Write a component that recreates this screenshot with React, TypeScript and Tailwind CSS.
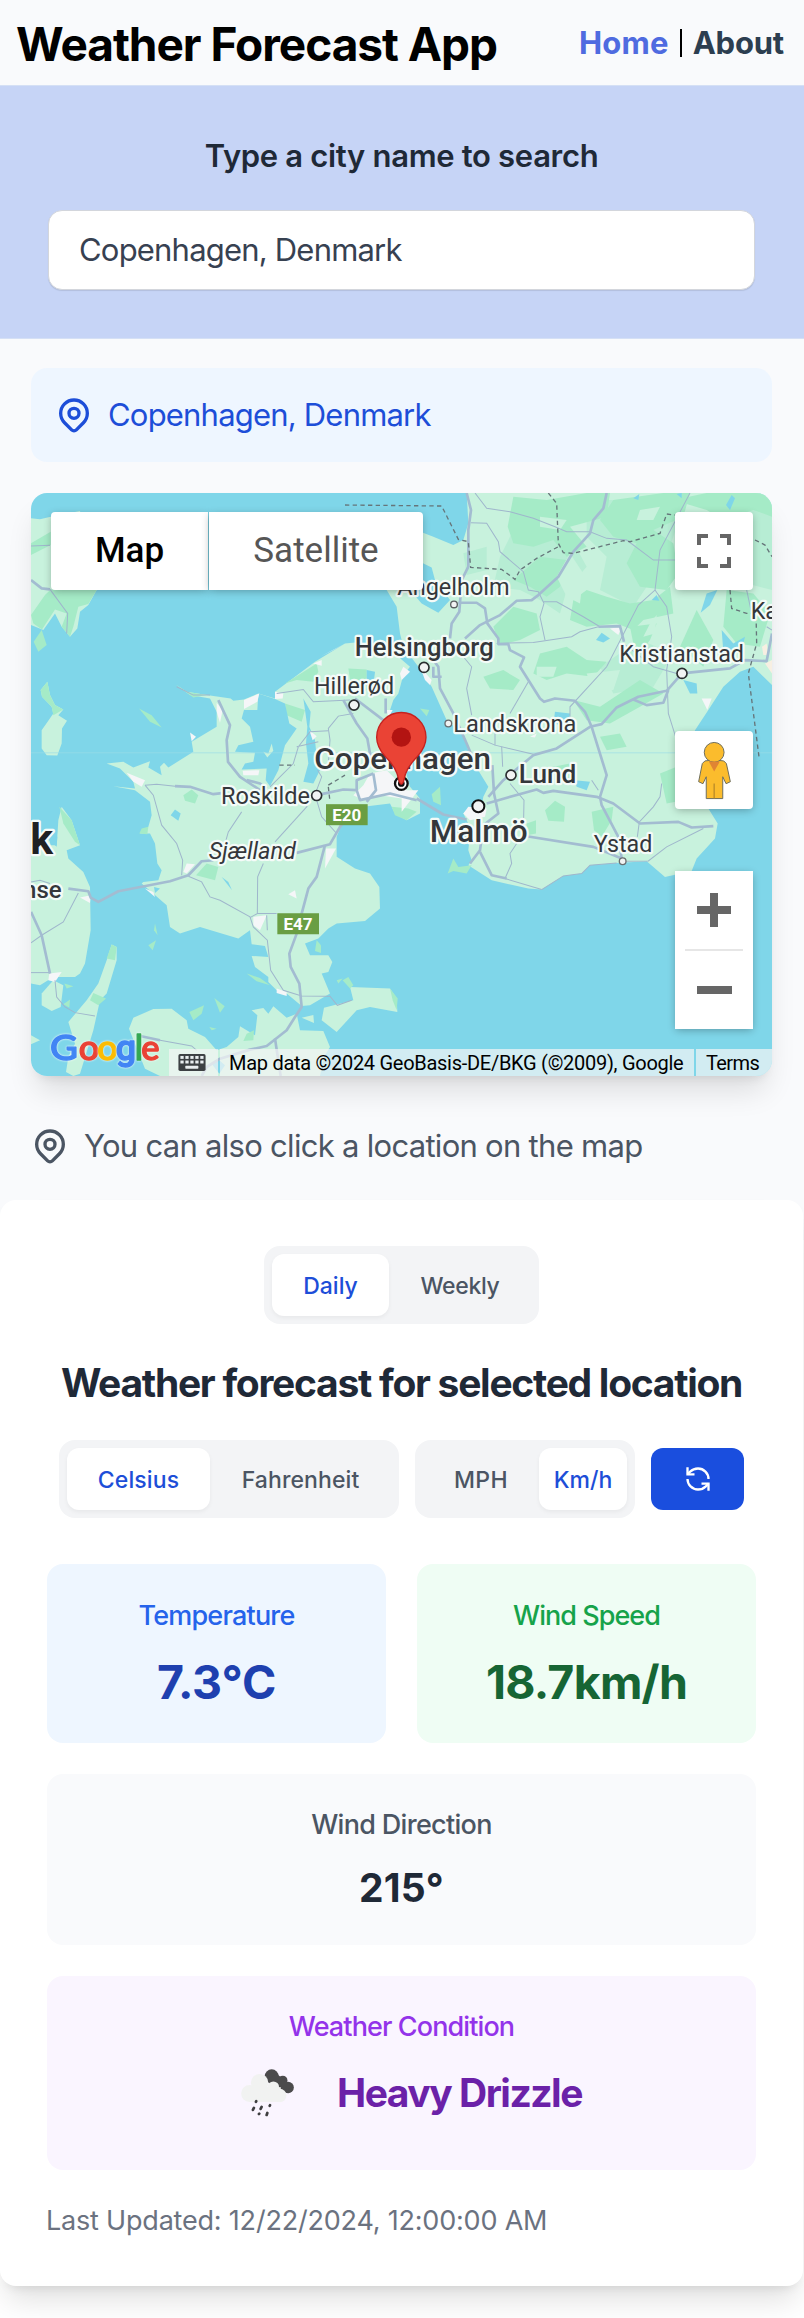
import React from "react";

const LAND = "#c8f2dd";
const FOREST = "#a5ebc7";
const MID = "#b7edd4";
const ROAD = "#a3bcd1";
const SEA = "#7fd6e9";

const land = [
  // Djursland
  "M33,115 60,118 92,110 180,93 230,330 205,375 180,395 172,445 150,470 125,440 105,400 70,450 33,435Z",
  // Samso
  "M62,630 82,605 90,645 105,675 130,688 115,705 141,722 126,745 125,790 112,826 80,825 65,805 65,750 100,700 95,680 66,650Z",
  // Zealand
  "M467,613 500,635 560,645 632,655 640,662 672,658 715,640 765,655 765,635 885,545 975,490 1005,487 1100,500 1170,560 1150,585 1135,640 1120,660 1105,705 1130,780 1170,920 1200,955 1200,1000 1160,1020 1125,1000 1110,970 1030,980 970,1020 950,1070 950,1130 1005,1165 1050,1180 1078,1220 1080,1285 1035,1322 950,1330 925,1345 895,1375 855,1390 870,1425 925,1425 937,1445 925,1475 905,1480 930,1540 870,1575 845,1577 800,1540 770,1530 745,1505 745,1490 705,1460 695,1427 745,1430 735,1397 695,1392 690,1350 655,1375 540,1340 480,1360 450,1340 440,1275 365,1210 370,1205 415,1200 425,1170 412,1150 405,1090 390,1060 360,1060 385,1040 395,1005 390,965 345,930 280,918 345,925 340,905 300,865 260,850 310,845 340,862 390,843 385,862 425,885 420,860 432,848 445,862 520,815 515,785 590,740 590,695 570,655 510,645Z",
  // Funen
  "M125,980 155,1020 180,1095 140,1110 145,1135 190,1175 210,1220 212,1350 195,1450 180,1480 165,1490 100,1490 60,1515 33,1510 33,1090 75,1070 110,1100 115,1020Z",
  "M100,1500 130,1515 122,1580 95,1592 65,1575 65,1540Z",
  // Langeland
  "M275,1393 290,1400 290,1440 260,1540 240,1560 220,1650 180,1780 160,1787 138,1775 145,1730 165,1690 145,1625 200,1560 235,1510 260,1440Z",
  "M33,1665 60,1680 33,1692Z",
  // Lolland and Falster
  "M327,1645 340,1612 400,1586 455,1585 500,1620 505,1645 555,1670 590,1710 620,1700 655,1670 660,1638 705,1665 712,1605 695,1590 730,1583 745,1600 760,1578 800,1612 830,1600 840,1650 910,1652 930,1700 912,1730 900,1787 420,1787 375,1765 345,1690Z",
  "M845,1612 880,1604 882,1628Z",
  // Mon
  "M912,1582 1000,1560 990,1520 1110,1525 1130,1555 1132,1595 1050,1580 1010,1590 950,1655 905,1620Z",
  // Sweden
  "M2256,39 1340,39 1345,130 1330,180 1300,195 1240,170 1209,158 1160,150 1100,330 1130,380 1140,460 1150,500 1195,560 1235,620 1280,720 1330,760 1350,830 1405,920 1390,950 1385,980 1345,985 1330,1000 1352,1045 1345,1110 1355,1140 1345,1155 1415,1200 1525,1225 1565,1228 1630,1187 1685,1180 1710,1155 1790,1148 1880,1143 1935,1190 2015,1172 2030,1135 2085,1075 2093,1030 2065,985 2000,850 2025,750 2065,690 2110,620 2160,575 2200,560 2256,615Z",
];

const mids = [
  "M1480,150 1560,120 1640,150 1700,260 1640,330 1620,400 1560,360 1500,330 1420,320 1440,230Z",
  "M1700,60 1840,60 1980,110 1950,200 2020,300 1900,290 1840,380 1740,330 1760,230 1700,170Z",
  "M2100,60 2256,90 2256,330 2140,300 2080,180Z",
  "M1740,560 1860,480 1960,520 1900,620 1780,640Z",
  "M1330,220 1400,200 1400,270 1340,285Z",
];

const forests = [
  "M33,190 92,155 92,195 33,225Z",
  "M92,328 230,330 205,372 175,380 160,440 150,470 125,440 140,400 105,388 66,448 40,430 33,405 75,345Z",
  "M65,450 80,495 55,515 41,485Z",
  "M62,630 82,605 90,645 105,675 130,688 100,705 95,680 66,650Z",
  "M357,685 395,705 425,742 390,725Z",
  "M467,613 500,635 560,645 520,652Z",
  "M795,610 890,550 895,575 880,605 830,600Z",
  "M985,565 1040,568 1040,600 1060,620 1020,640 990,600Z",
  "M795,670 855,690 845,725 800,705Z",
  "M490,945 515,928 535,945 525,970 495,962Z",
  "M560,1150 595,1160 585,1200 528,1185Z",
  "M118,980 155,1020 180,1095 165,1085 130,1030Z",
  "M365,1045 385,1040 382,1062 358,1060Z",
  "M275,1393 290,1400 285,1440 260,1435Z",
  "M220,1538 258,1555 235,1575 210,1560Z",
  "M508,1595 552,1575 545,1600 520,1620Z",
  "M583,1553 614,1578 600,1597Z",
  "M405,1330 413,1365 402,1350Z",
  "M385,1395 408,1380 398,1410Z",
  "M680,1480 720,1493 750,1515 710,1503Z",
  "M890,1380 903,1395 903,1418 885,1412Z",
  "M968,1500 985,1490 1000,1515 990,1525Z",
  "M950,1500 968,1495 955,1510Z",
  "M1110,1525 1133,1555 1130,1590 1118,1560Z",
  "M133,1510 160,1518 140,1525Z",
  "M130,1572 150,1558 148,1582Z",
  "M680,1660 702,1650 700,1680 670,1682Z",
  "M568,1640 590,1645 575,1650Z",
  "M1115,980 1165,985 1190,995 1160,1020 1125,1005Z",
  "M1235,942 1260,920 1263,975 1240,965Z",
  "M1200,685 1228,690 1220,708Z",
  "M1283,1180 1300,1135 1315,1160 1355,1155 1340,1180 1300,1172Z",
  // Scania
  "M1480,50 1580,60 1700,39 1770,39 1760,110 1650,140 1700,200 1640,230 1600,180 1540,200 1480,190 1463,140Z",
  "M1780,60 1930,39 2010,39 1990,110 1900,150 1960,190 1975,280 1940,330 1860,320 1820,250 1850,190 1780,170 1740,120Z",
  "M1560,230 1640,240 1620,320 1580,350 1530,320 1480,300Z",
  "M1660,360 1700,330 1760,350 1830,370 1900,360 1950,320 1960,400 1870,420 1840,450 1790,430 1700,440 1650,420Z",
  "M1420,440 1480,380 1550,400 1560,450 1500,480 1440,495Z",
  "M1560,520 1640,500 1700,540 1760,545 1720,590 1640,580 1580,600 1540,580Z",
  "M1830,440 1910,430 1890,480 1860,520 1840,490Z",
  "M1390,590 1450,570 1500,600 1480,630 1410,625Z",
  "M1660,660 1740,680 1860,600 1930,640 1860,680 1770,730 1700,720Z",
  "M1960,60 2060,39 2256,39 2256,110 2200,90 2110,120 2060,90Z",
  "M2120,330 2200,340 2250,400 2220,500 2150,490 2110,440Z",
  "M2030,390 2080,480 2050,560 1980,500Z",
  "M1575,990 1605,962 1635,980 1632,1025 1585,1022Z",
  "M1715,995 1780,980 1775,1020 1745,1070 1722,1050Z",
  "M1520,1030 1548,1020 1548,1060 1520,1065Z",
  "M1600,860 1650,850 1665,890 1610,900Z",
  "M1920,880 1970,860 1990,960 1940,970Z",
  "M1740,770 1800,760 1820,800 1760,810Z",
];

const pale = [
  "M1560,110 1640,120 1620,150 1560,140Z",
  "M1610,290 1650,220 1690,280 1680,370 1640,350Z",
  "M1860,90 1920,80 1900,120 1850,120Z",
  "M1890,430 1910,405 1905,460 1870,470Z",
  "M1700,580 1800,570 1780,630 1720,640Z",
  "M1550,560 1610,560 1600,590 1550,590Z",
  "M2060,230 2100,250 2080,300Z",
];

const towns = [
  "M880,550 905,540 905,557Z M940,510 975,490 900,530Z",
  "M672,660 718,640 712,665 672,687Z",
  "M590,668 608,690 600,728 590,695Z",
  "M510,757 528,770 515,783Z",
  "M765,635 790,640 788,655 765,657Z",
  "M320,878 375,900 365,920 340,905Z",
  "M668,872 718,870 715,885 670,885Z",
  "M868,750 890,768 878,780Z",
  "M1150,560 1170,575 1145,600 1140,580Z",
  "M1100,690 1118,690 1105,712Z",
  "M1050,880 1100,870 1160,930 1195,930 1145,995 1145,955 1080,945 1030,960 1000,945 1030,915Z",
  "M500,1150 525,1152 500,1180 490,1175Z",
  "M375,1225 400,1235 405,1250Z",
  "M180,1252 212,1245 210,1268Z",
  "M88,1480 125,1475 105,1505 85,1500Z",
  "M700,1310 740,1305 720,1350 700,1335Z",
  "M805,1242 825,1230 830,1255Z",
  "M918,1105 948,1105 915,1165Z",
  "M770,1525 800,1535 800,1547 770,1538Z",
  "M1330,1000 1345,980 1400,985 1395,1010 1350,1020Z",
  "M1200,560 1235,600 1230,615 1215,600Z",
  "M2045,655 2075,655 2062,690Z",
  "M1770,445 1805,440 1795,465Z",
  "M1530,770 1550,760 1545,772Z",
];

const lakes = [
  "M715,640 765,657 795,670 808,730 830,745 795,795 775,870 750,918 737,900 740,865 665,868 675,850 700,845 705,818 645,815 655,795 700,785 690,740 665,715 672,690 712,690Z",
  "M850,655 872,695 868,740 885,780 890,830 905,860 880,910 850,905 865,850 858,790 862,740 855,690Z",
  "M1209,250 1235,262 1245,300 1290,360 1255,398 1205,370 1170,330 1209,325Z",
  "M452,1005 465,988 482,1000 475,1022Z",
  "M605,1190 625,1205 636,1230Z",
  "M88,1080 112,1070 110,1095 92,1095Z",
  "M575,1750 598,1740 615,1755 598,1780Z",
  "M2042,398 2060,340 2092,330 2070,375Z",
  "M1728,480 1745,458 1770,475 1750,487Z",
  "M1895,360 1910,345 1918,362Z",
  "M1990,600 2030,610 2032,640 2010,640Z",
  "M2105,450 2140,490 2175,470 2165,510 2110,515Z",
  "M2118,75 2135,45 2145,55 2130,90Z",
  "M1665,900 1710,905 1700,930 1670,920Z",
  "M1605,695 1650,700 1645,740 1600,730Z",
  "M1840,55 1858,42 1855,60Z",
  "M1970,42 1985,39 1985,55Z",
  "M1040,570 1065,575 1062,600 1040,600Z",
  "M402,1220 420,1225 405,1238Z",
];

const fjordIsle = "M730,815 745,820 755,790 760,812 742,832Z";

const thick = [
  "M1760,39 1750,85 1720,120 1710,160 1660,215 1615,290 1555,345 1535,360 1490,362 1440,405 1380,435 1335,475",
  "M1340,39 1353,90 1345,150 1345,260 1325,300 1318,395 1295,430 1290,475",
  "M1315,368 1370,368 1395,385 1402,430 1435,475 1435,492 1465,492 1470,510 1512,532 1500,560 1560,655 1572,665 1605,655 1665,662 1695,695 1715,740 1760,885 1740,950 1745,975 1795,1070 1805,1135",
  "M1735,440 1800,438 1812,485",
  "M1986,580 1940,632 1855,650 1790,682 1745,732 1710,740 1610,805 1540,825 1450,900 1405,950",
  "M1986,580 2050,573 2130,565 2175,540 2240,543 2256,460",
  "M1840,658 1880,675 1930,668 1945,630",
  "M1240,540 1255,560 1260,625 1300,700 1340,790 1365,850",
  "M1258,590 1265,590 M1240,560 1240,590 1265,590",
  "M1417,855 1422,940 1435,1000 1390,1035 1380,1110 1350,1150",
  "M1400,970 1435,960 1550,928 1570,938 1600,932 1730,950 1780,970 1820,1000 1860,1030 1975,1025 2015,1042 2080,1038",
  "M1520,1068 1720,1100 1805,1135",
  "M1380,1115 1415,1185 1460,1195",
  "M1190,955 1270,1003 1340,1018",
  "M145,1225 205,1233 212,1252 235,1265 295,1233 450,1203 505,1185 545,1143 580,1140",
  "M830,1118 930,1092 960,1040 975,1020",
  "M915,1095 890,1190 865,1225 845,1300 830,1360 808,1420 812,1460 838,1510 845,1580 825,1610 800,1650 740,1697 690,1708 600,1735 560,1760 545,1787",
  "M765,1675 782,1787",
  "M595,660 630,735 620,780 624,845 660,890 720,930",
  "M465,918 510,920 580,942 612,938",
  "M680,900 720,910 740,925",
  "M905,942 970,928 1010,930 1020,960 1110,940 1190,960",
  "M33,1295 65,1365 90,1480",
  "M970,660 1010,730 1042,775 1050,820 1065,860",
  "M1005,655 1090,720",
  "M1097,655 1097,700",
  "M350,1665 420,1680",
  "M33,300 65,325 90,328",
  "M1060,880 1068,930 1040,965 M1010,930 1010,900 1060,880",
];

const thin = [
  "M1365,39 1400,85 1470,95 1540,115 1605,140 1640,155 1710,155 1760,175 1820,180 1900,240 1965,240",
  "M1353,128 1400,130 1435,185 1440,215 1510,275 1525,330 1555,335 1572,370 1560,410 1575,480",
  "M1570,365 1610,365 1690,410 1740,440",
  "M1430,490 1540,487 1655,470 1680,455 1735,440",
  "M2010,39 1920,210 1905,330 1855,375 1760,560 1650,680 1650,740",
  "M1905,330 1940,380 1955,470 1940,570 1945,700 1970,780",
  "M1525,605 1470,700",
  "M1330,530 1355,560 1340,625 1355,705",
  "M1355,765 1425,795 1540,822",
  "M1425,795 1425,735 M1445,800 1448,860",
  "M1810,490 1900,560 1986,585",
  "M1470,910 1512,960 1510,1060 1470,1120 1475,1150 1455,1195",
  "M1715,900 1735,930",
  "M1925,910 1920,950 1900,980 1858,1025 1852,1070",
  "M1805,1143 1885,1142 1940,1100 2050,1045",
  "M1565,1228 1630,1187 1685,1180 1710,1155 1790,1148",
  "M1455,1195 1565,1228",
  "M770,640 850,628 880,665 990,660",
  "M1000,700 955,708 925,745 930,780 925,850",
  "M835,800 870,755 925,752 M830,800 895,785 M750,920 820,850 835,800",
  "M470,620 520,645 570,645",
  "M375,915 400,945 425,1035 470,1090 488,1140 485,1185",
  "M375,915 410,912 465,918",
  "M505,1188 545,1205 570,1250 600,1260 690,1310 700,1340 742,1380 752,1470 790,1530 845,1547 930,1548 952,1575 995,1560",
  "M665,995 625,1055 615,1090",
  "M862,978 765,1085",
  "M730,1150 713,1190 712,1300 770,1300 M712,1300 690,1312 M740,1305 742,1350",
  "M890,960 905,1010 950,1060",
  "M175,1238 130,1325 65,1365 33,1388",
  "M105,1500 110,1550 135,1580 165,1597 225,1607",
  "M33,1477 90,1477",
  "M33,1205 60,1200 90,1210",
  "M33,198 90,196 M90,328 143,400 140,460",
  "M420,1680 515,1697 530,1710",
  "M2240,440 2256,450",
  "M2180,330 2195,400",
  "M893,870 905,890 890,930",
];

const dashed = [
  "M975,75 1265,78 1315,178 1345,185 1352,262 1445,268 1485,298 1500,270 1550,235 1615,200",
  "M1585,39 1610,70 1615,190 1630,218 1660,220 1810,182 1830,185 1920,160 1940,102 1965,105",
  "M2205,180 2235,195 2256,230",
  "M2130,330 2135,385 2180,400 2208,400 2210,490 2185,580 2218,838",
  "M925,915 975,885 M925,920 930,965",
  "M778,855 825,855",
];

type Label = { t: string; x: number; y: number; w: number; s: number; b?: number; i?: boolean };
const labels: Label[] = [
  { t: "Ängelholm", x: 1132, y: 345, w: 337, s: 70 },
  { t: "Helsingborg", x: 1004, y: 528, w: 417, s: 76, b: 500 },
  { t: "Hillerød", x: 882, y: 642, w: 240, s: 70 },
  { t: "Landskrona", x: 1300, y: 757, w: 369, s: 70 },
  { t: "Kristianstad", x: 1798, y: 546, w: 374, s: 70 },
  { t: "Copenhagen", x: 883, y: 867, w: 530, s: 88, b: 500 },
  { t: "Lund", x: 1496, y: 910, w: 173, s: 76, b: 500 },
  { t: "Malmö", x: 1229, y: 1084, w: 294, s: 92, b: 500 },
  { t: "Ystad", x: 1721, y: 1115, w: 176, s: 70 },
  { t: "Roskilde", x: 603, y: 970, w: 267, s: 70 },
  { t: "Sjælland", x: 566, y: 1137, w: 262, s: 72, i: true },
];

type Dot = [number, number, number, string, number];
const dots: Dot[] = [
  [1212, 562, 15, "#2b2e31", 5],
  [1002, 675, 15, "#2b2e31", 5],
  [1302, 373, 10, "#5a5d60", 4],
  [1285, 730, 10, "#6a6d70", 4],
  [1986, 580, 15, "#2b2e31", 5],
  [1473, 885, 15, "#2b2e31", 5],
  [1375, 978, 18, "#111", 6],
  [1808, 1143, 10, "#6a6d70", 4],
  [890, 946, 15, "#2b2e31", 5],
];

type Letter = [string, number, number, string, string];
const logo: Letter[] = [
  ["G", 90, 84, "#4285f4", "Lato, sans-serif"],
  ["o", 176, 61, "#ea4335", "Lato, sans-serif"],
  ["o", 232, 61, "#fbbc04", "Lato, sans-serif"],
  ["g", 287, 61, "#4285f4", "Roboto, sans-serif"],
  ["l", 344, 25, "#34a853", "Lato, sans-serif"],
  ["e", 364, 55, "#ea4335", "Lato, sans-serif"],
];

function MapCanvas() {
  return (
    <svg viewBox="33 39 2223 1748" preserveAspectRatio="none" className="block h-full w-full font-['Roboto',sans-serif]">
      <rect x="33" y="39" width="2223" height="1748" fill={SEA} />
      {land.map((d) => (
        <path key={d} d={d} fill={LAND} />
      ))}
      {mids.map((d) => (
        <path key={d} d={d} fill={MID} />
      ))}
      {forests.map((d) => (
        <path key={d} d={d} fill={FOREST} />
      ))}
      {pale.map((d) => (
        <path key={d} d={d} fill={LAND} />
      ))}
      {lakes.map((d) => (
        <path key={d} d={d} fill={SEA} />
      ))}
      <path d={fjordIsle} fill={LAND} />
      {towns.map((d) => (
        <path key={d} d={d} fill="#f5f6f8" />
      ))}
      <path d="M2226,500 2240,490 2245,525 2230,525Z M2235,550 2256,540 2256,580Z" fill="#f7efe2" />
      <path d="M33,818H2256" stroke="#9bdde9" strokeWidth="2" />
      {thin.map((d) => (
        <path key={d} d={d} fill="none" stroke="#9fb6cc" strokeWidth="3" />
      ))}
      {thick.map((d) => (
        <path key={d} d={d} fill="none" stroke={ROAD} strokeWidth="8" strokeLinejoin="round" />
      ))}
      {dashed.map((d) => (
        <path key={d} d={d} fill="none" stroke="#66757a" strokeWidth="4" strokeDasharray="13 10" />
      ))}

      <rect x="918" y="972" width="125" height="63" fill="#6a9e43" />
      <rect x="772" y="1299" width="125" height="63" fill="#6a9e43" />
      <g fill="#fff" fontWeight="700" fontSize="51" textAnchor="middle">
        <text x="980" y="1022">E20</text>
        <text x="834" y="1348">E47</text>
      </g>

      <circle cx="1144" cy="910" r="19" fill="#fff" stroke="#111" strokeWidth="7" />
      <circle cx="1144" cy="910" r="10" fill="#111" />

      <g stroke="#f4fbf8" strokeWidth="13" strokeLinejoin="round" paintOrder="stroke" fill="#34373b">
        {labels.map((l) => (
          <text
            key={l.t}
            x={l.x}
            y={l.y}
            textLength={l.w}
            fontSize={l.s}
            fontWeight={l.b ?? 400}
            fontStyle={l.i ? "italic" : "normal"}
            lengthAdjust="spacingAndGlyphs"
          >
            {l.t}
          </text>
        ))}
        <text x="2192" y="418" fontSize="70">Ka</text>
        <text x="125" y="1252" fontSize="72" textAnchor="end" fontWeight="500">nse</text>
        <text x="99" y="1122" fontSize="128" textAnchor="end" fontWeight="700" fill="#1f2123">k</text>
      </g>
      {dots.map(([x, y, r, c, w]) => (
        <circle key={`${x}-${y}`} cx={x} cy={y} r={r} fill="#f1f3f3" stroke={c} strokeWidth={w} />
      ))}

      <path
        d="M1144,912 C1136,912 1136,893 1131,880 C1122,854 1108,843 1095,828 C1082,813 1070,793 1070,771 A74,74 0 0 1 1218,771 C1218,793 1206,813 1193,828 C1180,843 1166,854 1157,880 C1152,893 1152,912 1144,912Z"
        fill="#ea4335"
        stroke="#c5221f"
        strokeWidth="4"
      />
      <circle cx="1144" cy="771" r="29" fill="#b31412" />

      <g fontSize="106" strokeLinejoin="round">
        <path d="M100,1700 410,1715" stroke="#fff" strokeOpacity="0" />
        {logo.map(([c, x, w, f, font]) => (
          <text
            key={x}
            x={x}
            y="1738"
            textLength={w}
            lengthAdjust="spacingAndGlyphs"
            fontFamily={font}
            fontWeight="500"
            fill={f}
            stroke={f}
            strokeWidth="4"
            className="[filter:drop-shadow(0_0_3px_#fff)]"
          >
            {c}
          </text>
        ))}
      </g>
    </svg>
  );
}

function Pin({ className }: { className: string }) {
  return (
    <svg viewBox="0 0 24 24" fill="none" stroke="currentColor" strokeWidth="2" strokeLinecap="round" strokeLinejoin="round" className={className}>
      <path d="M17.657 16.657L13.414 20.9a1.998 1.998 0 01-2.827 0l-4.244-4.243a8 8 0 1111.314 0z" />
      <path d="M15 11a3 3 0 11-6 0 3 3 0 016 0z" />
    </svg>
  );
}

function Keyboard() {
  const keys: React.ReactNode[] = [];
  for (let r = 0; r < 2; r++)
    for (let c = 0; c < 5; c++) keys.push(<rect key={`${r}${c}`} x={6 + c * 15.2} y={6 + r * 14} width="10" height="9" fill="#e9eef0" />);
  return (
    <svg viewBox="0 0 83 52" className="h-[17px] w-[28px]">
      <rect width="83" height="52" rx="5" fill="#3c4043" />
      {keys}
      <rect x="21" y="36" width="40" height="9" rx="2" fill="#e9eef0" />
    </svg>
  );
}

function Pegman() {
  return (
    <svg viewBox="886 782 106 178" className="h-[59px] w-[35px]">
      <g fill="#fbbc2d" stroke="#6d6d5c" strokeWidth="3" strokeLinejoin="round">
        <path d="M910,842 Q938,836 967,842 L975,850 987,905 974,911 964,890 964,956 914,956 914,890 904,911 891,905 902,850Z" />
        <circle cx="938" cy="816" r="30" />
      </g>
      <path d="M922,844H955L938,874Z" fill="#e08433" />
      <path d="M938,910V956" stroke="#b98a2a" strokeWidth="4" />
    </svg>
  );
}

function CloudIcon() {
  return (
    <svg viewBox="65 86 157 143" className="h-[48px] w-[53px] shrink-0">
      <g fill="#4b4b4c">
        <circle cx="156" cy="108" r="21" />
        <circle cx="189" cy="120" r="14" />
        <circle cx="205" cy="141" r="17" />
        <path d="M140,118 170,100 210,130 205,158 180,150 150,130Z" />
      </g>
      <g fill="#f1f2f1">
        <circle cx="120" cy="127" r="26" />
        <circle cx="90" cy="159" r="25" />
        <circle cx="161" cy="140" r="17" />
        <circle cx="180" cy="165" r="20" />
        <rect x="88" y="140" width="95" height="44" />
      </g>
      <g stroke="#3e3e40" strokeWidth="8" strokeLinecap="round">
        <path d="M109,184 110,182 M100,208 103,202 M123,205 126,199 M150,196 151,194 M118,220 119,219 M141,223 143,217" />
      </g>
    </svg>
  );
}

const ctl = "absolute bg-white shadow-[0_2px_8px_-1px_rgba(0,0,0,0.3)]";

export default function App() {
  return (
    <div className="h-[2318px] w-[804px] overflow-hidden bg-white bg-[linear-gradient(#f9fafc_1240px,#ffffff_1240px)] font-['Inter',sans-serif]">
      <header className="flex h-[85px] items-center justify-between pr-[20px] pl-[16px]">
        <h1 className="pt-[2px] text-[46px] leading-[60px] font-bold tracking-[-1.03px] text-black">Weather Forecast App</h1>
        <nav className="flex items-center pt-[1px] text-[31px] leading-[40px] font-[650]">
          <a className="tracking-[0.2px] text-[#4f6be0]">Home</a>
          <span className="mx-[11px] h-[28px] w-[2px] bg-black" aria-hidden="true" />
          <a className="tracking-[-0.2px] text-[#2c3e50]">About</a>
        </nav>
      </header>

      <section className="flex h-[254px] flex-col items-center border-y border-[#d5e0f5] bg-[#c6d4f6] pt-[46px] pr-[49px] pl-[48px]">
        <h2 className="text-[31px] leading-[48px] font-semibold tracking-[-0.32px] text-[#1f2937]">Type a city name to search</h2>
        <div className="mt-[30px] flex h-[80px] w-full items-center rounded-[14px] border border-[#d3d6dc] bg-white pt-[1px] pl-[30px] text-[31px] tracking-[-0.8px] text-[#374151] shadow-[0_1px_1px_rgba(0,0,0,0.1)]">
          Copenhagen, Denmark
        </div>
      </section>

      <main className="pr-[32px] pl-[31px]">
        <div className="mt-[29px] flex h-[94px] items-center rounded-[16px] bg-[#eef6ff] pl-[23px] text-[31px] tracking-[-0.8px] text-[#1d4ed8]">
          <Pin className="mr-[14px] h-[40px] w-[40px]" />
          <span className="pt-[1px]">Copenhagen, Denmark</span>
        </div>

        <div className="relative mt-[31px] h-[583px] rounded-[16px] shadow-[0_20px_30px_-6px_rgba(0,0,0,0.12),0_8px_12px_-8px_rgba(0,0,0,0.12)]">
          <div className="h-full overflow-hidden rounded-[16px]">
            <MapCanvas />
          </div>
          <div className="absolute top-[19px] left-[20px] flex h-[78px] font-['Roboto',sans-serif] text-[35px]">
            <div className="flex w-[157px] items-center justify-center rounded-l-[4px] bg-white pt-[1px] font-medium text-black shadow-[0_2px_8px_-1px_rgba(0,0,0,0.3)]">Map</div>
            <div className="ml-[1px] flex w-[214px] items-center justify-center rounded-r-[4px] bg-white pt-[1px] text-[#565656] shadow-[0_2px_8px_-1px_rgba(0,0,0,0.3)]">Satellite</div>
          </div>
          <div className={`${ctl} top-[19px] right-[19px] flex h-[78px] w-[78px] items-center justify-center rounded-[4px]`}>
            <svg viewBox="0 0 34 34" fill="none" stroke="#666" strokeWidth="4" className="h-[34px] w-[34px]">
              <path d="M2 11V2H11M23 2H32V11M32 23V32H23M11 32H2V23" />
            </svg>
          </div>
          <div className={`${ctl} top-[238px] right-[19px] flex h-[78px] w-[78px] items-center justify-center rounded-[4px]`}>
            <Pegman />
          </div>
          <div className={`${ctl} top-[378px] right-[19px] flex h-[158px] w-[78px] flex-col items-center`}>
            <svg viewBox="0 0 34 34" fill="#666" className="mt-[22px] h-[34px] w-[34px]">
              <path d="M13 0H21V13H34V21H21V34H13V21H0V13H13Z" />
            </svg>
            <div className="mt-[22px] h-[2px] w-[58px] bg-[#e6e6e6]" />
            <svg viewBox="0 0 35 34" fill="#666" className="mt-[22px] h-[34px] w-[35px]">
              <path d="M0 13H35V21H0Z" />
            </svg>
          </div>
          <div className="absolute right-0 bottom-0 flex h-[27px] gap-[2px] overflow-hidden rounded-br-[16px] font-['Roboto',sans-serif] text-[20px] leading-[29px] whitespace-nowrap text-black">
            <div className="flex w-[49px] items-center bg-[#f5f5f5]/70 pl-[9px]">
              <Keyboard />
            </div>
            <div className="w-[474px] bg-[#f5f5f5]/70 pl-[9px] tracking-[-0.28px]">Map data ©2024 GeoBasis-DE/BKG (©2009), Google</div>
            <div className="w-[76px] bg-[#f5f5f5]/70 pl-[10px] tracking-[-0.6px]">Terms</div>
          </div>
        </div>

        <p className="mt-[50px] flex h-[40px] items-center text-[31px] leading-[40px] tracking-[-0.71px] text-[#4b5563]">
          <Pin className="mr-[14px] -ml-[1px] h-[40px] w-[40px]" />
          You can also click a location on the map
        </p>
      </main>

      <section className="mt-[34px] h-[1086px] w-[803px] rounded-[16px] bg-white pt-[46px] pr-[47px] pl-[47px] shadow-[0_20px_30px_-6px_rgba(0,0,0,0.12),0_8px_12px_-8px_rgba(0,0,0,0.12)]">
        <div className="flex justify-center text-[23px] font-medium">
          <div className="flex h-[78px] rounded-[16px] bg-[#f3f4f6] p-[8px] text-[#4b5563]">
            <div className="flex w-[117px] items-center justify-center rounded-[12px] bg-white pt-[2px] text-[#1d4ed8] shadow-[0_2px_4px_rgba(0,0,0,0.05)]">Daily</div>
            <div className="flex w-[142px] items-center justify-center pt-[2px] tracking-[-0.35px]">Weekly</div>
          </div>
        </div>

        <h2 className="mt-[31px] text-center text-[39px] leading-[56px] font-[650] tracking-[-1.28px] whitespace-nowrap text-[#1f2937]">
          Weather forecast for selected location
        </h2>

        <div className="mt-[29px] flex items-center justify-center gap-[16px] text-[23px] font-medium text-[#4b5563]">
          <div className="flex h-[78px] rounded-[16px] bg-[#f3f4f6] p-[8px]">
            <div className="flex w-[143px] items-center justify-center rounded-[12px] bg-white pt-[2px] tracking-[0.1px] text-[#1d4ed8] shadow-[0_2px_4px_rgba(0,0,0,0.05)]">Celsius</div>
            <div className="flex w-[181px] items-center justify-center pt-[2px] tracking-[0.1px]">Fahrenheit</div>
          </div>
          <div className="flex h-[78px] rounded-[16px] bg-[#f3f4f6] p-[8px]">
            <div className="flex w-[116px] items-center justify-center pt-[2px] tracking-[0.4px]">MPH</div>
            <div className="flex w-[88px] items-center justify-center rounded-[12px] bg-white pt-[2px] text-[#1d4ed8] shadow-[0_2px_4px_rgba(0,0,0,0.05)]">Km/h</div>
          </div>
          <button className="flex h-[62px] w-[93px] items-center justify-center rounded-[12px] bg-[#1a4ede] text-white">
            <svg viewBox="0 0 24 24" fill="none" stroke="currentColor" strokeWidth="2" className="h-[28px] w-[28px]">
              <path d="M21 12a9 9 0 0 0-9-9 9.75 9.75 0 0 0-6.74 2.74L3 8" />
              <path d="M3 2v6h6" />
              <path d="M3 12a9 9 0 0 0 9 9 9.75 9.75 0 0 0 6.74-2.74L21 16" />
              <path d="M15 16h6v6" />
            </svg>
          </button>
        </div>

        <div className="mt-[46px] grid grid-cols-2 gap-x-[31px] text-center text-[27px] leading-[40px] font-medium">
          <div className="h-[179px] rounded-[16px] bg-[#eef6ff] pt-[32px]">
            <p className="tracking-[-0.79px] text-[#2563eb]">Temperature</p>
            <p className="mt-[14px] text-[46.5px] leading-[64px] font-bold tracking-[-0.24px] text-[#1e40af]">7.3°C</p>
          </div>
          <div className="h-[179px] rounded-[16px] bg-[#effdf4] pt-[32px]">
            <p className="tracking-[-0.98px] text-[#16a34a]">Wind Speed</p>
            <p className="mt-[14px] text-[46.5px] leading-[64px] font-bold tracking-[-0.74px] text-[#166534]">18.7km/h</p>
          </div>
          <div className="col-span-2 mt-[31px] h-[171px] rounded-[16px] bg-[#f9fafc] pt-[31px]">
            <p className="tracking-[-0.69px] text-[#4b5563]">Wind Direction</p>
            <p className="mt-[15px] text-[39px] leading-[56px] font-[650] tracking-[0.2px] text-[#1f2937]">215°</p>
          </div>
          <div className="col-span-2 mt-[31px] h-[194px] rounded-[16px] bg-[#faf5ff] pt-[31px]">
            <p className="tracking-[-0.89px] text-[#9333ea]">Weather Condition</p>
            <div className="mt-[18px] flex h-[56px] items-center pl-[194px]">
              <CloudIcon />
              <p className="pl-[43px] text-[39px] leading-[56px] font-[650] tracking-[-1.48px] whitespace-nowrap text-[#6b21a8]">Heavy Drizzle</p>
            </div>
          </div>
        </div>

        <p className="mt-[31px] -ml-[1px] text-[27px] leading-[40px] tracking-[-0.2px] text-[#6b7280]">Last Updated: 12/22/2024, 12:00:00 AM</p>
      </section>
    </div>
  );
}
